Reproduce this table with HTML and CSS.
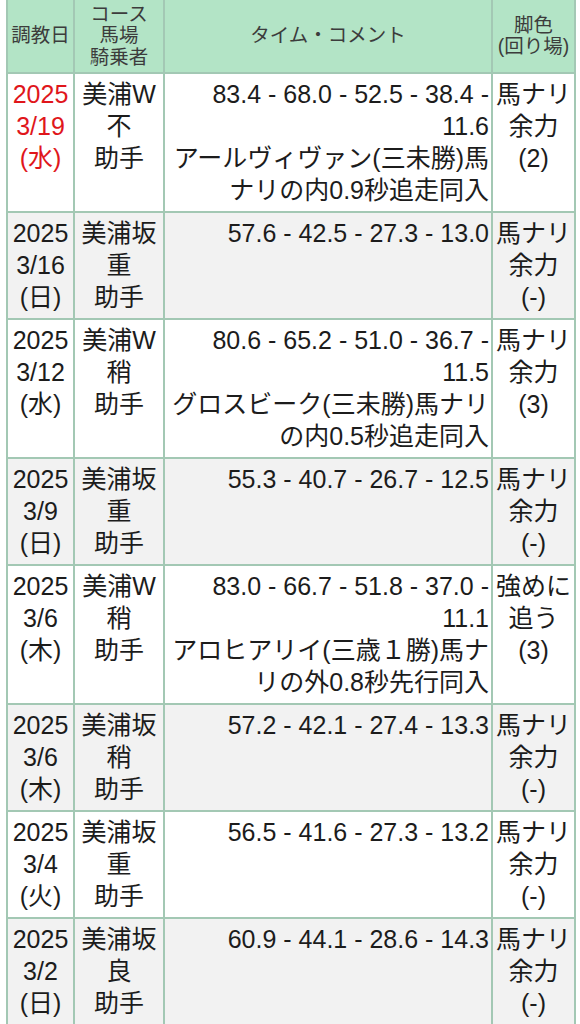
FILE: index.html
```html
<!DOCTYPE html>
<html lang="ja">
<head>
<meta charset="utf-8">
<link rel="stylesheet" href="styles.css">
</head>
<body>
<table class="log">
<colgroup><col class="c1"><col class="c2"><col class="c3"><col class="c4"></colgroup>
<thead>
<tr>
<th>調教日</th>
<th class="stack">コース<br>馬場<br>騎乗者</th>
<th>タイム・コメント</th>
<th class="stack">脚色<br>(回り場)</th>
</tr>
</thead>
<tbody>
<tr>
<td class="date red">2025<br>3/19<br>(水)</td>
<td class="course">美浦W<br>不<br>助手</td>
<td class="time">83.4 - 68.0 - 52.5 - 38.4 - 11.6<br>アールヴィヴァン(三未勝)馬ナリの内0.9秒追走同入</td>
<td class="leg">馬ナリ<br>余力<br>(2)</td>
</tr>
<tr>
<td class="date">2025<br>3/16<br>(日)</td>
<td class="course">美浦坂<br>重<br>助手</td>
<td class="time">57.6 - 42.5 - 27.3 - 13.0</td>
<td class="leg">馬ナリ<br>余力<br>(-)</td>
</tr>
<tr>
<td class="date">2025<br>3/12<br>(水)</td>
<td class="course">美浦W<br>稍<br>助手</td>
<td class="time">80.6 - 65.2 - 51.0 - 36.7 - 11.5<br>グロスビーク(三未勝)馬ナリの内0.5秒追走同入</td>
<td class="leg">馬ナリ<br>余力<br>(3)</td>
</tr>
<tr>
<td class="date">2025<br>3/9<br>(日)</td>
<td class="course">美浦坂<br>重<br>助手</td>
<td class="time">55.3 - 40.7 - 26.7 - 12.5</td>
<td class="leg">馬ナリ<br>余力<br>(-)</td>
</tr>
<tr>
<td class="date">2025<br>3/6<br>(木)</td>
<td class="course">美浦W<br>稍<br>助手</td>
<td class="time">83.0 - 66.7 - 51.8 - 37.0 - 11.1<br>アロヒアリイ(三歳１勝)馬ナリの外0.8秒先行同入</td>
<td class="leg">強めに<br>追う<br>(3)</td>
</tr>
<tr>
<td class="date">2025<br>3/6<br>(木)</td>
<td class="course">美浦坂<br>稍<br>助手</td>
<td class="time">57.2 - 42.1 - 27.4 - 13.3</td>
<td class="leg">馬ナリ<br>余力<br>(-)</td>
</tr>
<tr>
<td class="date">2025<br>3/4<br>(火)</td>
<td class="course">美浦坂<br>重<br>助手</td>
<td class="time">56.5 - 41.6 - 27.3 - 13.2</td>
<td class="leg">馬ナリ<br>余力<br>(-)</td>
</tr>
<tr>
<td class="date">2025<br>3/2<br>(日)</td>
<td class="course">美浦坂<br>良<br>助手</td>
<td class="time">60.9 - 44.1 - 28.6 - 14.3</td>
<td class="leg">馬ナリ<br>余力<br>(-)</td>
</tr>
</tbody>
</table>
</body>
</html>
```
FILE: styles.css
```css
html, body {
  margin: 0;
  padding: 0;
  background: #ffffff;
}
body {
  font-family: "Liberation Sans", "Noto Sans CJK JP", sans-serif;
  color: #1c1c1c;
  overflow: hidden;
}
.log {
  border-collapse: collapse;
  table-layout: fixed;
  width: 568px;
  margin: -2px 0 0 6px;
}
.c1 { width: 67px; }
.c2 { width: 90px; }
.c3 { width: 328px; }
.c4 { width: 83px; }
.log th, .log td {
  border: 2px solid #a3c8b4;
  vertical-align: top;
}
.log th {
  background: #b3e4c6;
  color: #3c3c3c;
  font-weight: normal;
  font-size: 19.5px;
  line-height: 21.5px;
  height: 72px;
  padding: 0;
  vertical-align: middle;
  text-align: center;
}
.log td {
  font-size: 25px;
  line-height: 32px;
  padding: 4px 1px 5px;
  text-align: center;
}
.log tbody tr:nth-child(even) td {
  background: #f2f2f2;
}
.log td.time {
  text-align: right;
  padding: 4px 2px 5px 3px;
}
.log td.red {
  color: #e0161b;
}
```
